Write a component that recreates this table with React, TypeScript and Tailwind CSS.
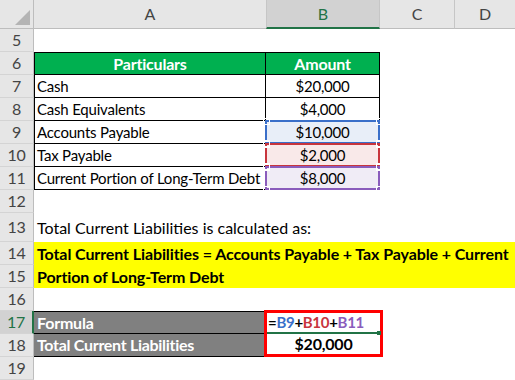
import React from "react";

const rh = "bg-[#e6e6e6] border-r border-r-[#bdbdbd] border-b border-b-[#d4d4d4] flex items-center justify-center text-[#444] text-[16px]";

function RowHead({ n, active }: { n: number; active?: boolean }) {
  return active ? (
    <div className="bg-[#d2d2d2] border-r-2 border-r-[#217346] border-b border-b-[#d4d4d4] flex items-center justify-center text-[#217346] text-[16px]">{n}</div>
  ) : (
    <div className={rh}>{n}</div>
  );
}

const E = () => <div className="bg-white" />;

function Ref({ color, fill, text }: { color: string; fill: string; text: string }) {
  return (
    <div className="relative border-r border-b border-black bg-white">
      <div className={`absolute inset-[0px] flex items-center justify-center ${fill}`}>{text}</div>
      <div className={`absolute -left-[1px] -top-[1px] -right-[1px] -bottom-[1px] border-2 ${color}`} />
      <Corner cls={color} pos="-left-[2px] -top-[2px]" />
      <Corner cls={color} pos="-right-[3px] -top-[2px]" />
      <Corner cls={color} pos="-left-[2px] -bottom-[3px]" />
      <Corner cls={color} pos="-right-[3px] -bottom-[3px]" />
    </div>
  );
}

function Corner({ cls, pos }: { cls: string; pos: string }) {
  const bg = cls.replace("border-", "bg-");
  return <div className={`absolute z-10 w-[5px] h-[5px] ${pos} ${bg} outline outline-1 outline-white`} />;
}

export default function App() {
  return (
    <div className="w-[515px] h-[380px] overflow-hidden bg-white font-['Lato',sans-serif] text-[15px] tracking-[-0.2px] text-black grid grid-cols-[34px_232px_114px_75px_60px] grid-rows-[29px_repeat(8,23px)_29px_repeat(6,23px)]">
      {/* header */}
      <div className="bg-[#e6e6e6] border-r border-r-[#bdbdbd] border-b border-b-[#bdbdbd] relative">
        <svg className="absolute left-[15px] top-[10px]" width="15" height="15" viewBox="0 0 15 15">
          <polygon points="15,0 15,15 0,15" fill="#b4b4b4" />
        </svg>
      </div>
      <div className="bg-[#e6e6e6] border-b border-b-[#bdbdbd] flex items-center justify-center text-[#444] text-[16px] tracking-normal">A</div>
      <div className="bg-[#d2d2d2] border-b-2 border-b-[#217346] border-l border-l-[#c6c6c6] border-r border-r-[#c6c6c6] flex items-center justify-center text-[#217346] text-[16px] tracking-normal">B</div>
      <div className="bg-[#e6e6e6] border-b border-b-[#bdbdbd] border-r border-r-[#c6c6c6] flex items-center justify-center text-[#444] text-[16px] tracking-normal">C</div>
      <div className="bg-[#e6e6e6] border-b border-b-[#bdbdbd] flex items-center justify-center text-[#444] text-[16px] tracking-normal">D</div>

      {/* 5 */}
      <RowHead n={5} /><E /><E /><E /><E />
      {/* 6 */}
      <RowHead n={6} />
      <div className="bg-[#00b050] border border-black text-white font-bold text-[16px] flex items-center justify-center">Particulars</div>
      <div className="bg-[#00b050] border-t border-b border-r border-black text-white font-bold text-[16px] flex items-center justify-center">Amount</div>
      <E /><E />
      {/* 7 */}
      <RowHead n={7} />
      <div className="border-l border-r border-b border-black flex items-center pl-[2px]">Cash</div>
      <div className="border-r border-b border-black flex items-center justify-center">$20,000</div>
      <E /><E />
      {/* 8 */}
      <RowHead n={8} />
      <div className="border-l border-r border-b border-black flex items-center pl-[2px]">Cash Equivalents</div>
      <div className="border-r border-b border-black flex items-center justify-center">$4,000</div>
      <E /><E />
      {/* 9 */}
      <RowHead n={9} />
      <div className="border-l border-r border-b border-black flex items-center pl-[2px]">Accounts Payable</div>
      <Ref color="border-[#3a6fc9]" fill="bg-[#e8eef8]" text="$10,000" />
      <E /><E />
      {/* 10 */}
      <RowHead n={10} />
      <div className="border-l border-r border-b border-black flex items-center pl-[2px]">Tax Payable</div>
      <Ref color="border-[#c8353d]" fill="bg-[#f9e9e9]" text="$2,000" />
      <E /><E />
      {/* 11 */}
      <RowHead n={11} />
      <div className="border-l border-r border-b border-black flex items-center pl-[2px] whitespace-nowrap">Current Portion of Long-Term Debt</div>
      <Ref color="border-[#8a5cbc]" fill="bg-[#f0ecf6]" text="$8,000" />
      <E /><E />
      {/* 12 */}
      <RowHead n={12} /><E /><E /><E /><E />
      {/* 13 */}
      <RowHead n={13} />
      <div className="col-span-4 flex items-end pb-[2px] pl-[3px] whitespace-nowrap text-[16px] tracking-normal">Total Current Liabilities is calculated as:</div>
      {/* 14-15 */}
      <RowHead n={14} />
      <div className="col-span-4 row-span-2 bg-[#ffff00] font-bold text-[16px] tracking-[-0.1px] pl-[3px] grid grid-rows-2 whitespace-nowrap">
        <div className="flex items-center">Total Current Liabilities = Accounts Payable + Tax Payable + Current</div>
        <div className="flex items-center">Portion of Long-Term Debt</div>
      </div>
      <RowHead n={15} />
      {/* 16 */}
      <RowHead n={16} /><E /><E /><E /><E />
      {/* 17 */}
      <RowHead n={17} active />
      <div className="bg-[#808080] border-t border-b border-black text-white font-bold text-[16px] flex items-center pl-[3px]">Formula</div>
      <div className="row-span-2 -ml-[2px] -mr-[3px] -mt-[1px] z-10 border-[3px] border-[#ff0000] bg-white grid grid-rows-2 font-bold text-[16px]">
        <div className="relative flex items-center pl-[1px] border-b-2 border-b-[#217346] text-[15px] tracking-[-0.3px]">
          <span>=</span><span className="text-[#3a6fc9]">B9</span><span>+</span><span className="text-[#c8353d]">B10</span><span>+</span><span className="text-[#8a5cbc]">B11</span>
          <div className="absolute -right-[1px] -bottom-[3px] w-[4px] h-[4px] bg-[#217346]" />
        </div>
        <div className="flex items-center justify-center">$20,000</div>
      </div>
      <E /><E />
      {/* 18 */}
      <RowHead n={18} />
      <div className="bg-[#808080] border-b border-black text-white font-bold text-[16px] tracking-[-0.3px] flex items-center pl-[3px] whitespace-nowrap">Total Current Liabilities</div>
      <E /><E />
      {/* 19 */}
      <RowHead n={19} /><E /><E /><E /><E />
    </div>
  );
}
